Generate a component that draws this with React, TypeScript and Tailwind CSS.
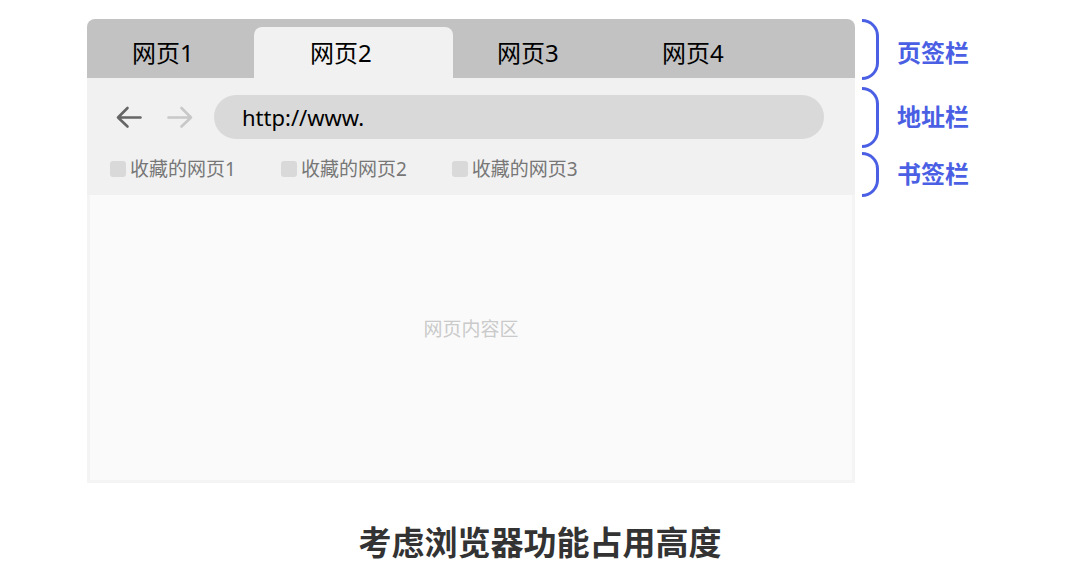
const bookmarks = ["收藏的网页1", "收藏的网页2", "收藏的网页3"];

function Tab(props: any) {
  return (
    <button
      type="button"
      role="tab"
      aria-selected={props.active ? true : false}
      className={`${props.className} py-2 text-left ${
        props.active ? "rounded-t-lg bg-[#f1f1f1]" : ""
      }`}
    >
      {props.title}
    </button>
  );
}

function Arrow(props: any) {
  return (
    <svg
      className={`block h-6 w-7 ${props.className}`}
      viewBox="0 0 28 24"
      fill="none"
      stroke="currentColor"
      strokeWidth="2.6"
      strokeLinecap="round"
      strokeLinejoin="round"
    >
      <path d={props.path} />
    </svg>
  );
}

function Measure(props: any) {
  return (
    <li className="flex items-center gap-[18px]">
      <span
        className={`w-[17px] shrink-0 rounded-r-[17px] border-y-3 border-r-3 border-[#4a5fe3] ${props.size}`}
      ></span>
      <span className={props.className}>{props.label}</span>
    </li>
  );
}

export default function App() {
  return (
    <main className="min-h-screen bg-white pt-[19px] font-['Noto_Sans','Noto_Sans_CJK_SC',sans-serif]">
      <div className="flex items-start gap-[7px] pr-[111px] pl-[87px]">
        <section className="min-w-0 flex-1 overflow-hidden rounded-t-lg">
          <div
            role="tablist"
            className="flex h-[59px] bg-[#c2c2c2] pt-2 text-2xl leading-9 text-black"
          >
            <Tab title="网页1" className="w-[167px] pl-[45px]" />
            <Tab title="网页2" className="w-[199px] pl-14" active />
            <Tab title="网页3" className="w-[165px] pl-11" />
            <Tab title="网页4" className="w-[165px] pl-11" />
          </div>

          <div className="bg-[#f1f1f1]">
            <div className="flex items-center pt-[17px] pr-[31px] pl-7">
              <button type="button" aria-label="后退" className="mr-[23px]">
                <Arrow
                  className="text-[#666]"
                  path="M25.500 12.500H3M12.500 3 3 12.500l9.500 9"
                />
              </button>
              <button type="button" aria-label="前进" className="mr-5">
                <Arrow
                  className="text-[#c8c8c8]"
                  path="M2.500 12.500H25M15.500 3l9.500 9.500-9.500 9"
                />
              </button>
              <input
                type="text"
                aria-label="地址"
                defaultValue="http://www."
                className="h-11 min-w-0 flex-1 rounded-full bg-[#d9d9d9] px-7 text-[22px] text-black outline-none"
              />
            </div>
            <nav className="flex gap-[45px] pt-4 pb-3 pl-[23px] text-[19px] leading-7 text-[#777]">
              {bookmarks.map((name) => (
                <a key={name} href="#" className="flex items-center gap-1">
                  <span className="size-4 rounded-[3px] bg-[#d9d9d9]"></span>
                  {name}
                </a>
              ))}
            </nav>
          </div>

          <div className="flex min-h-72 items-center justify-center border-x-3 border-b-3 border-[#f4f4f4] bg-[#fafafa] pb-4 text-[19px] text-[#cacaca]">
            网页内容区
          </div>
        </section>

        <ul className="text-2xl leading-9 font-bold text-[#4a5fe3]">
          <Measure label="页签栏" size="h-[61px]" className="pt-1.5" />
          <Measure label="地址栏" size="mt-[7px] h-[61px]" className="pt-1.5" />
          <Measure label="书签栏" size="mt-1 h-[45px]" className="pt-0.5" />
        </ul>
      </div>

      <h1 className="pt-9 text-center text-[33px] leading-12 font-bold text-[#333]">
        考虑浏览器功能占用高度
      </h1>
    </main>
  );
}
